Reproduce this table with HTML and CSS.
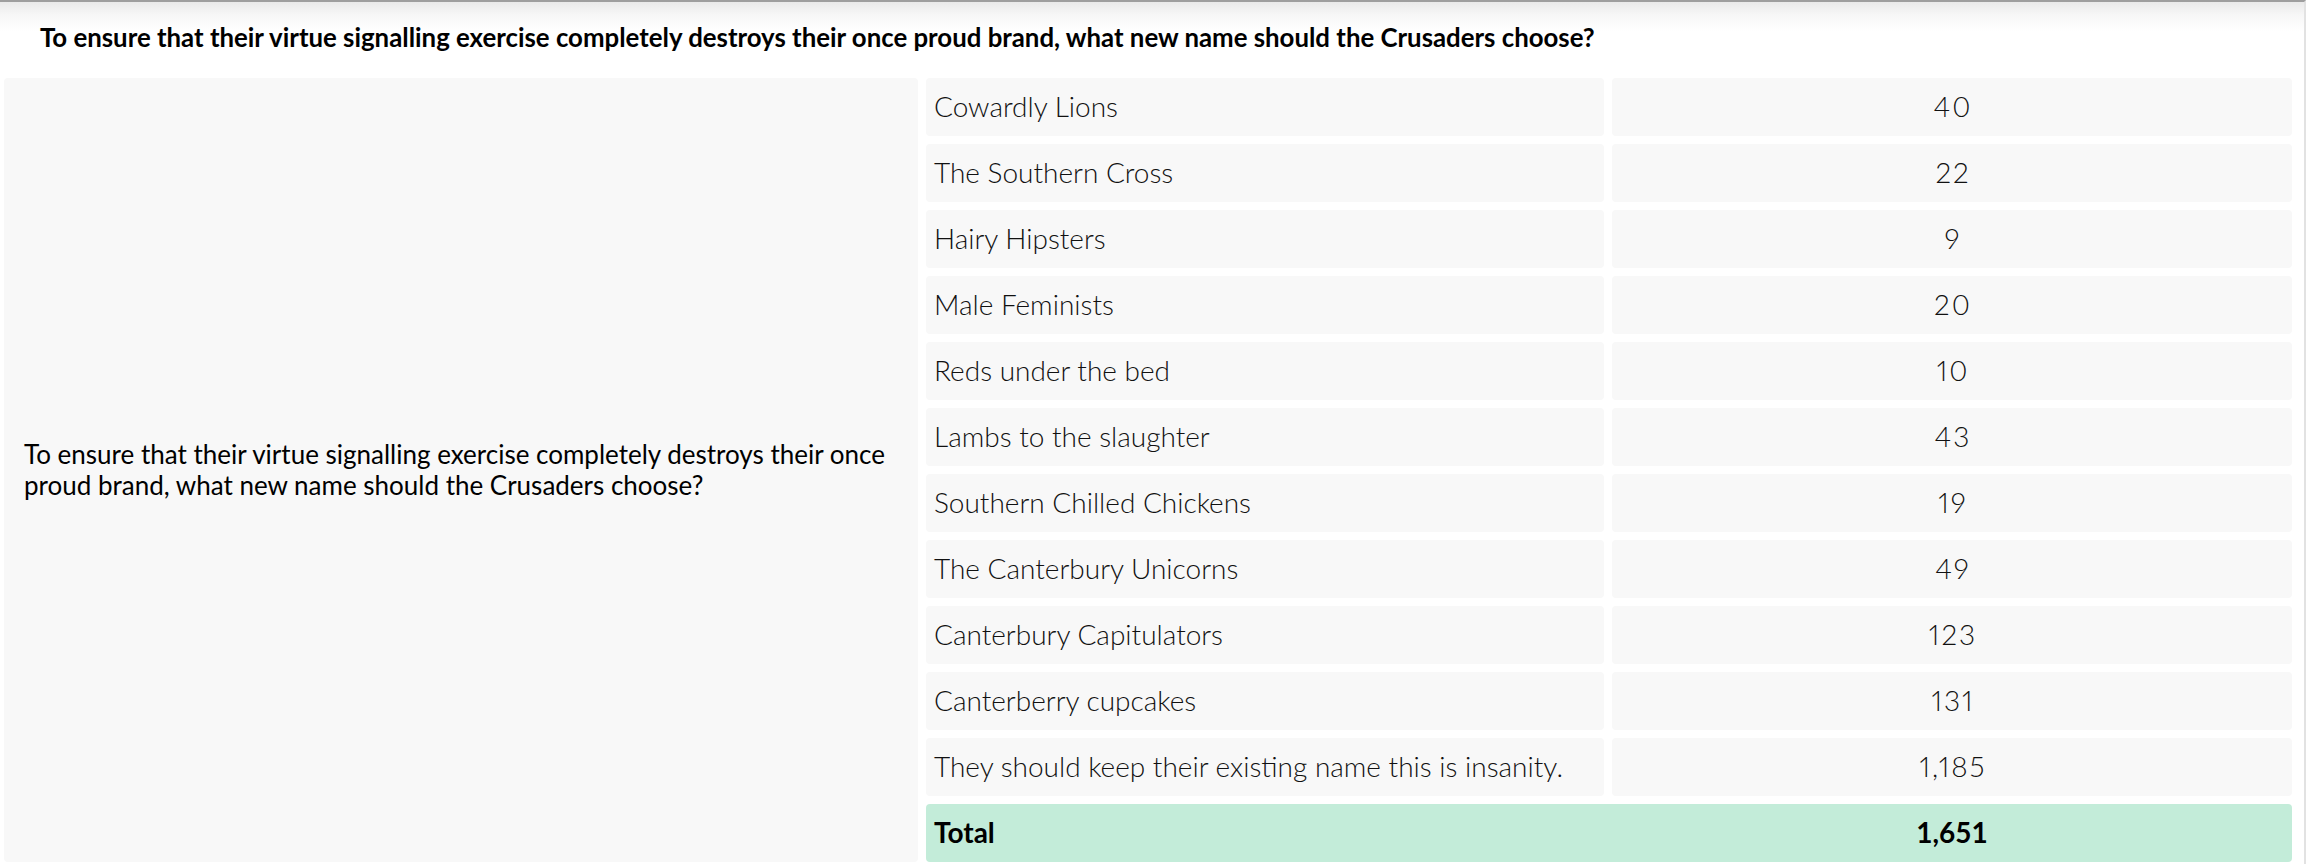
FILE: index.html
```html
<!DOCTYPE html>
<html lang="en">
<head>
<meta charset="utf-8">
<title>Poll results</title>
<link rel="stylesheet" href="styles.css">
</head>
<body>
<div class="page">
  <div class="header">
    <h1 class="title">To ensure that their virtue signalling exercise completely destroys their once proud brand, what new name should the Crusaders choose?</h1>
  </div>
  <div class="results">
    <div class="question">To ensure that their virtue signalling exercise completely destroys their once proud brand, what new name should the Crusaders choose?</div>
    <div class="cell label">Cowardly Lions</div><div class="cell value">40</div>
    <div class="cell label">The Southern Cross</div><div class="cell value">22</div>
    <div class="cell label">Hairy Hipsters</div><div class="cell value">9</div>
    <div class="cell label">Male Feminists</div><div class="cell value">20</div>
    <div class="cell label">Reds under the bed</div><div class="cell value">10</div>
    <div class="cell label">Lambs to the slaughter</div><div class="cell value">43</div>
    <div class="cell label">Southern Chilled Chickens</div><div class="cell value">19</div>
    <div class="cell label">The Canterbury Unicorns</div><div class="cell value">49</div>
    <div class="cell label">Canterbury Capitulators</div><div class="cell value">123</div>
    <div class="cell label">Canterberry cupcakes</div><div class="cell value">131</div>
    <div class="cell label">They should keep their existing name this is insanity.</div><div class="cell value">1,185</div>
    <div class="total">
      <div class="total-label">Total</div>
      <div class="total-value">1,651</div>
    </div>
  </div>
</div>
</body>
</html>
```
FILE: styles.css
```css
html, body {
  margin: 0;
  padding: 0;
  background: #fff;
}
body {
  font-family: Lato, "Open Sans", sans-serif;
  color: #111;
  width: 2306px;
  height: 864px;
  overflow: hidden;
}
.page {
  box-sizing: border-box;
  height: 864px;
  border-top: 2px solid #9e9e9e;
  border-right: 2px solid #e2e2e2;
}
.header {
  box-sizing: border-box;
  height: 76px;
  padding: 20px 0 0 40px;
  background: linear-gradient(#e9e9e9 0px, #f6f6f6 12px, #fff 30px);
}
.title {
  margin: 0;
  font-size: 25.8px;
  font-weight: 700;
  line-height: 1.2;
  color: #000;
}
.results {
  display: grid;
  grid-template-columns: 914px 678px 680px;
  grid-auto-rows: 58px;
  column-gap: 8px;
  row-gap: 8px;
  padding-left: 4px;
}
.question {
  grid-column: 1;
  grid-row: 1 / span 12;
  background: #f8f8f8;
  border-radius: 4px;
  display: flex;
  align-items: center;
  padding: 0 30px 0 20px;
  font-size: 26px;
  line-height: 1.2;
  color: #000;
}
.cell {
  background: #f8f8f8;
  border-radius: 4px;
  display: flex;
  align-items: center;
  font-size: 28px;
  font-weight: 300;
  line-height: 1.2;
  color: #111;
}
.label {
  grid-column: 2;
  padding-left: 8px;
}
.value {
  grid-column: 3;
  justify-content: center;
  font-variant-numeric: proportional-nums;
  letter-spacing: 2px;
  padding-left: 2px;
}
.total {
  grid-column: 2 / span 2;
  display: grid;
  grid-template-columns: 686px 680px;
  align-items: center;
  background: #c3ecd9;
  border-radius: 4px;
  font-size: 28px;
  font-weight: 700;
  line-height: 1.2;
  color: #000;
}
.total-label {
  padding-left: 8px;
}
.total-value {
  text-align: center;
}
```
